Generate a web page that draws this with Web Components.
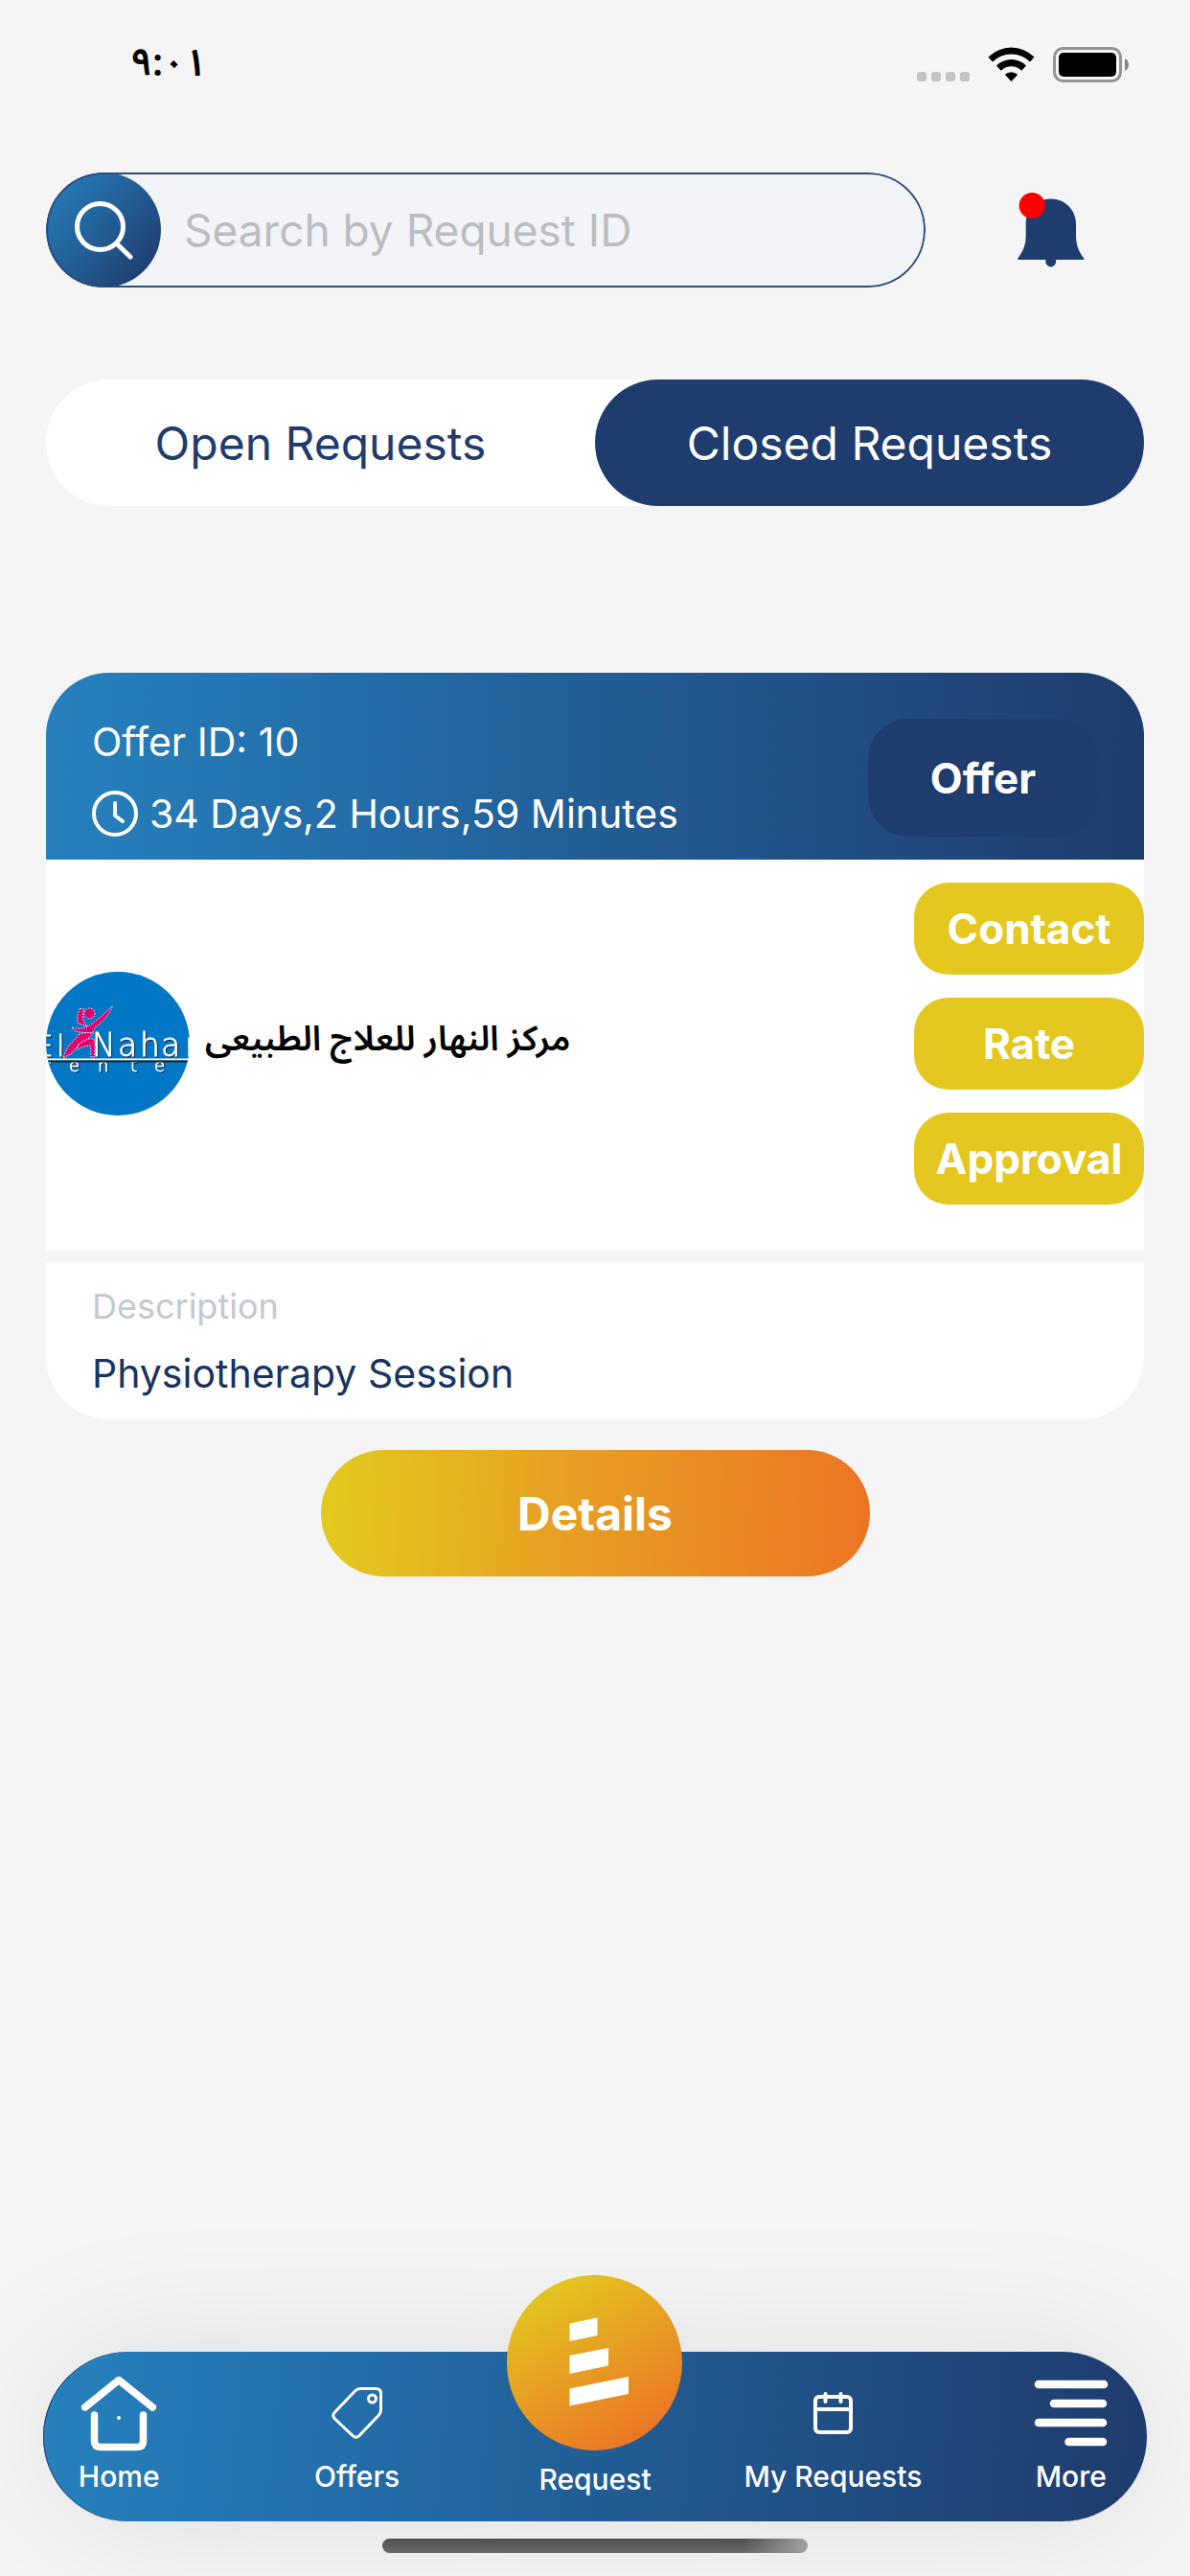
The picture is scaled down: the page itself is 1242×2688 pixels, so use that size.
<!DOCTYPE html>
<html lang="en">
<head>
<meta charset="utf-8">
<meta name="viewport" content="width=device-width, initial-scale=1">
<title>Requests</title>
<style>
  :root {
    --navy: #1f3c6e;
    --page: #f5f5f5;
    --gold: #e4c81f;
    --blue-ramp: #2681bd, #236aa5 33%, #215a91 55%, #1f3c6e 98%;
    --gold-ramp: #e3ca1e, #e79f23 45%, #ec7424;
    --gutter: 48px;
  }
  * { box-sizing: border-box; }
  body {
    margin: 0;
    background: var(--page);
    font-family: Inter, "Liberation Sans", sans-serif;
  }
</style>
</head>
<body>
<requests-screen></requests-screen>

<script>
const base = `*, ::before, ::after { box-sizing: border-box; }
  button, input { font: inherit; color: inherit; border: 0; margin: 0; padding: 0; background: none; }
  a { color: inherit; text-decoration: none; }
  svg { display: block; flex: none; }`;

function define(name, markup) {
  const template = document.createElement('template');
  template.innerHTML = markup.replace('<style>', '<style>' + base);
  customElements.define(name, class extends HTMLElement {
    constructor() {
      super();
      this.attachShadow({ mode: 'open' }).append(template.content.cloneNode(true));
    }
  });
}

define('status-bar', `
<style>
  :host { display: flex; justify-content: space-between; align-items: center; height: 134px; padding: 0 60px 0 136px; color: #000; }
  time { font: 600 40px/60px "Noto Sans Arabic", "DejaVu Sans", sans-serif; direction: ltr; unicode-bidi: bidi-override; }
</style>
<time>٩:٠١</time>
<svg width="228" height="48" viewBox="954 43 228 48" role="img" aria-label="Wi-Fi on, battery full">
  <g fill="#c4c4c4"><rect x="957" y="75" width="10" height="10" rx="3"/><rect x="972" y="75" width="10" height="10" rx="3"/><rect x="987" y="75" width="10" height="10" rx="3"/><rect x="1002" y="75" width="10" height="10" rx="3"/></g>
  <path d="M1031.500 59.500a34 34 0 0 1 48 0l-4.500 5a27.500 27.500 0 0 0-39 0zM1040 68.500a22 22 0 0 1 31 0l-4.800 5.200a15.300 15.300 0 0 0-21.400 0zM1048.800 77.800a10 10 0 0 1 13.400 0l-6.700 7.200z"/>
  <rect x="1100.500" y="50.500" width="69" height="34" rx="9" fill="none" stroke="#949494" stroke-width="3"/>
  <rect x="1105" y="55" width="60" height="25" rx="5"/>
  <path d="M1174 61q4 2 4 6.500t-4 6.500z" fill="#858585"/>
</svg>`);

define('search-field', `
<style>
  :host { display: block; flex: 1; min-width: 0; }
  label { position: relative; display: flex; align-items: center; height: 120px; border-radius: 60px; background: #f3f4f8; overflow: hidden; }
  label::after { content: ""; position: absolute; inset: 0; border: 2px solid #2d4a7c; border-radius: 60px; pointer-events: none; }
  .lens { flex: none; width: 120px; height: 120px; border-radius: 50%; background: linear-gradient(130deg, #2681bd, #235f97 48%, #1f3c6e 90%); }
  input { flex: 1; min-width: 0; height: 100%; padding: 0 24px; font-size: 46px; outline: 0; }
  input::placeholder { color: #bcbdc0; opacity: 1; }
</style>
<label>
  <span class="lens"><svg width="120" height="120" viewBox="0 0 120 120" fill="none" stroke="#fff" stroke-width="5" stroke-linecap="round" aria-hidden="true"><circle cx="56.500" cy="56.500" r="24"/><path d="M74.500 75l13.500 13"/></svg></span>
  <input type="search" placeholder="Search by Request ID" aria-label="Search by Request ID">
</label>`);

define('alert-bell', `
<style>
  :host { display: block; }
  button { display: block; cursor: pointer; }
</style>
<button type="button" aria-label="Notifications">
  <svg width="80" height="84" viewBox="1056 198 80 84" aria-hidden="true">
    <path fill="#1f3c6e" d="M1096.700 207.500c-15 0-26 11.500-26 26v12c0 10-3 17-8 23.500-1 1-.5 2 .8 2h66.500c1.300 0 1.800-1 .8-2-5-6.500-7.800-13.500-7.800-23.500v-12c0-14.500-11.300-26-26.300-26zM1091.300 270.500v2.500a5.400 5.400 0 0 0 10.800 0v-2.500z"/>
    <circle cx="1077.200" cy="214.500" r="13.600" fill="#f00"/>
  </svg>
</button>`);

define('request-tabs', `
<style>
  :host { display: block; }
  div { display: grid; grid-template-columns: 1fr 1fr; border-radius: 66px; background: #fff; }
  button { height: 132px; border-radius: 66px; font-size: 48px; color: var(--navy); cursor: pointer; }
  button[aria-selected="true"] { background: var(--navy); color: #fff; }
</style>
<div role="tablist">
  <button type="button" role="tab" aria-selected="false">Open Requests</button>
  <button type="button" role="tab" aria-selected="true">Closed Requests</button>
</div>`);

define('pill-button', `
<style>
  :host { display: block; }
  button { width: 100%; height: 96px; border-radius: 36px; background: var(--gold); color: #fff; font-size: 44px; font-weight: 700; cursor: pointer; }
  :host([kind="offer"]) button { height: 123px; border-radius: 42px; background: var(--navy); font-size: 44px; }
  :host([kind="primary"]) button { height: 132px; border-radius: 66px; background: linear-gradient(92deg, var(--gold-ramp)); font-size: 48px; }
</style>
<button type="button"><slot></slot></button>`);

define('provider-logo', `
<style>
  :host { display: block; flex: none; }
  .letters { font-family: "DejaVu Sans", sans-serif; font-weight: 200; fill: #fff; stroke: #fff; stroke-width: 0.8px; filter: drop-shadow(1.500px 1px 0 #1a2a3c); }
</style>
<svg width="150" height="150" viewBox="0 0 150 150" role="img" aria-label="El Nahar center">
  <defs><clipPath id="disc"><circle cx="75" cy="75" r="75"/></clipPath></defs>
  <g clip-path="url(#disc)">
    <rect width="150" height="150" fill="#0277c5"/>
    <g class="letters">
      <text x="-12 11" y="88" font-size="31">El</text>
      <text x="48 75 98 120 145" y="88" font-size="33">Nahar</text>
      <text x="-4 24 54 88 113" y="104" font-size="18">cente</text>
    </g>
    <path d="M0 91.500h150" stroke="#fff" stroke-width="2"/><path d="M0 93.500h150" stroke="#14202e" stroke-width="2"/>
    <g fill="#e5006f" stroke="#fff" stroke-width="1" stroke-dasharray="1.500 1.500">
      <path d="M35.500 38.500c-3 6-3.500 11-1.500 15.500l9 3c-4-4-6-11-3-18z"/>
      <path d="M27.500 58q10 4 21-4Q59 46 69.500 35.500 66 46 54 56q-5 4-5 8l-14-1q-7-1-7.500-5z"/>
      <path d="M34 65.500q8-3 15-1-3 4-8 7-9 5-13 13l-10 5.500q3-12 12-19z"/>
      <path d="M34 76q8-7 16-6 2.500 8 0 19h-3q0-8-1-12-7 0-14 5z"/>
      <circle cx="45.500" cy="43.500" r="5.500"/>
    </g>
  </g>
</svg>`);

define('offer-card', `
<style>
  :host { display: block; border-radius: 66px; overflow: hidden; }
  header { display: flex; justify-content: space-between; padding: 48px 48px 24px; background: linear-gradient(91deg, var(--blue-ramp)); color: #fff; font-size: 41px; line-height: 48px; }
  .facts { display: flex; flex-direction: column; justify-content: space-between; }
  .left { display: flex; gap: 12px; }
  p { margin: 0; }
  pill-button { width: 240px; flex: none; }
  .provider { display: flex; align-items: center; gap: 16px; padding: 24px 0 48px; background: #fff; }
  .provider p { flex: 1; text-align: left; color: #000; padding-bottom: 8px; font: 600 36px/54px "Noto Sans Arabic", "DejaVu Sans", sans-serif; }
  .actions { display: grid; gap: 24px; }
  .about { margin-top: 12px; padding: 24px 48px; background: #fff; display: grid; gap: 24px; color: #17335f; }
  h3 { margin: 0; font-weight: 400; font-size: 36px; line-height: 44px; color: #c3c8d2; }
  .about p { font-size: 41px; line-height: 48px; }
</style>
<header>
  <div class="facts">
    <p>Offer ID: 10</p>
    <p class="left"><svg width="48" height="48" viewBox="0 0 48 48" fill="none" stroke="#fff" stroke-width="4" stroke-linecap="round" stroke-linejoin="round" aria-hidden="true"><circle cx="24" cy="24" r="22"/><path d="M24 13v13l8 6"/></svg><span>34 Days,2 Hours,59 Minutes</span></p>
  </div>
  <pill-button kind="offer">Offer</pill-button>
</header>
<div class="provider">
  <provider-logo></provider-logo>
  <p lang="ar"><bdi>مركز النهار للعلاج الطبيعى</bdi></p>
  <div class="actions">
    <pill-button>Contact</pill-button>
    <pill-button>Rate</pill-button>
    <pill-button>Approval</pill-button>
  </div>
</div>
<div class="about">
  <h3>Description</h3>
  <p>Physiotherapy Session</p>
</div>`);

define('nav-item', `
<style>
  :host { display: block; }
  a { display: flex; flex-direction: column; align-items: center; gap: 8px; font-size: 30px; line-height: 36px; font-weight: 500; color: #fff; white-space: nowrap; }
  .icon { display: grid; place-items: center; height: 80px; }
  :host([raised]) .icon { width: 183px; height: 183px; margin: -104px 0 4px; border-radius: 50%; background: linear-gradient(150deg, #e3ca1e 8%, #e79f23 48%, #ec7424 88%); }
</style>
<a href="#"><span class="icon"><slot name="icon"></slot></span><slot></slot></a>`);

define('tab-bar', `
<style>
  :host { display: block; padding: 0 45px; }
  nav { border-radius: 90px; padding: 24px 0 26px; background: linear-gradient(96deg, var(--blue-ramp)); box-shadow: 0 0 150px rgba(0, 0, 0, .1), inset 1px 0 0 #1f3c6e; }
  /* the five columns share the full window width, not the pill's */
  div { display: grid; grid-template-columns: repeat(5, 1fr); margin: 0 -45px; }
</style>
<nav aria-label="Main"><div>
  <nav-item>Home
    <svg slot="icon" width="80" height="80" viewBox="0 0 80 80" fill="none" stroke="#fff" stroke-width="7.500" stroke-linecap="round" stroke-linejoin="round"><path d="M4.700 34L40 5.500 75.300 34M14.500 42v27q0 6.500 6.500 6.500h38q6.500 0 6.500-6.500V42"/><circle cx="40" cy="45" r="2" fill="#fff" stroke="none"/></svg>
  </nav-item>
  <nav-item>Offers
    <svg slot="icon" width="54" height="56" viewBox="0 0 54 56" fill="none" stroke="#fff" stroke-width="3"><path d="M30 2.500h16.500q5 0 5 5V25q0 3-2 5L29 51.500q-3.500 3.500-7 0L3.500 34q-3.500-3.500 0-7L24.500 5q2.500-2.500 5.500-2.500z"/><circle cx="42.500" cy="13" r="4"/></svg>
  </nav-item>
  <nav-item raised>Request
    <svg slot="icon" width="183" height="183" viewBox="0 0 183 183" fill="#fff"><path d="M65.500 50.500L94.500 44.500V63L65.500 69zM65.500 84L106 76V94.500L65.500 103zM65.500 118.500L127 106V124L65.500 136.500z"/></svg>
  </nav-item>
  <nav-item>My Requests
    <svg slot="icon" width="42" height="48" viewBox="0 0 42 48" fill="none" stroke="#fff" stroke-width="4"><rect x="3" y="7" width="37" height="37" rx="4"/><path d="M3 20h37"/><path d="M13.500 4v8M29.500 4v8" stroke-linecap="round"/></svg>
  </nav-item>
  <nav-item>More
    <svg slot="icon" width="78" height="72" viewBox="0 0 78 72" stroke="#fff" stroke-width="8.500" stroke-linecap="round"><path d="M5 6h68M21 26h51M5 46h67M36.500 66H72"/></svg>
  </nav-item>
</div></nav>`);

define('requests-screen', `
<style>
  :host { display: flex; flex-direction: column; min-height: 100vh; overflow: hidden; }
  .top { display: flex; align-items: center; gap: 90px; margin: 46px var(--gutter) 0; padding-right: 58px; }
  request-tabs { margin: 96px var(--gutter) 0; }
  offer-card { margin: 174px var(--gutter) 0; }
  .details { width: calc(50% - var(--gutter)); margin: 32px auto 0; }
  tab-bar { margin-top: auto; }
  .handle { width: 444px; height: 15px; margin: 18px auto 24px; border-radius: 8px; background: linear-gradient(90deg, transparent 85%, #a0a0a0), linear-gradient(#4d4e4d, #6b6b6b); }
  main { display: block; }
</style>
<status-bar></status-bar>
<main>
  <div class="top"><search-field></search-field><alert-bell></alert-bell></div>
  <request-tabs></request-tabs>
  <offer-card></offer-card>
  <pill-button class="details" kind="primary">Details</pill-button>
</main>
<tab-bar></tab-bar>
<div class="handle"></div>`);
</script>
</body>
</html>
